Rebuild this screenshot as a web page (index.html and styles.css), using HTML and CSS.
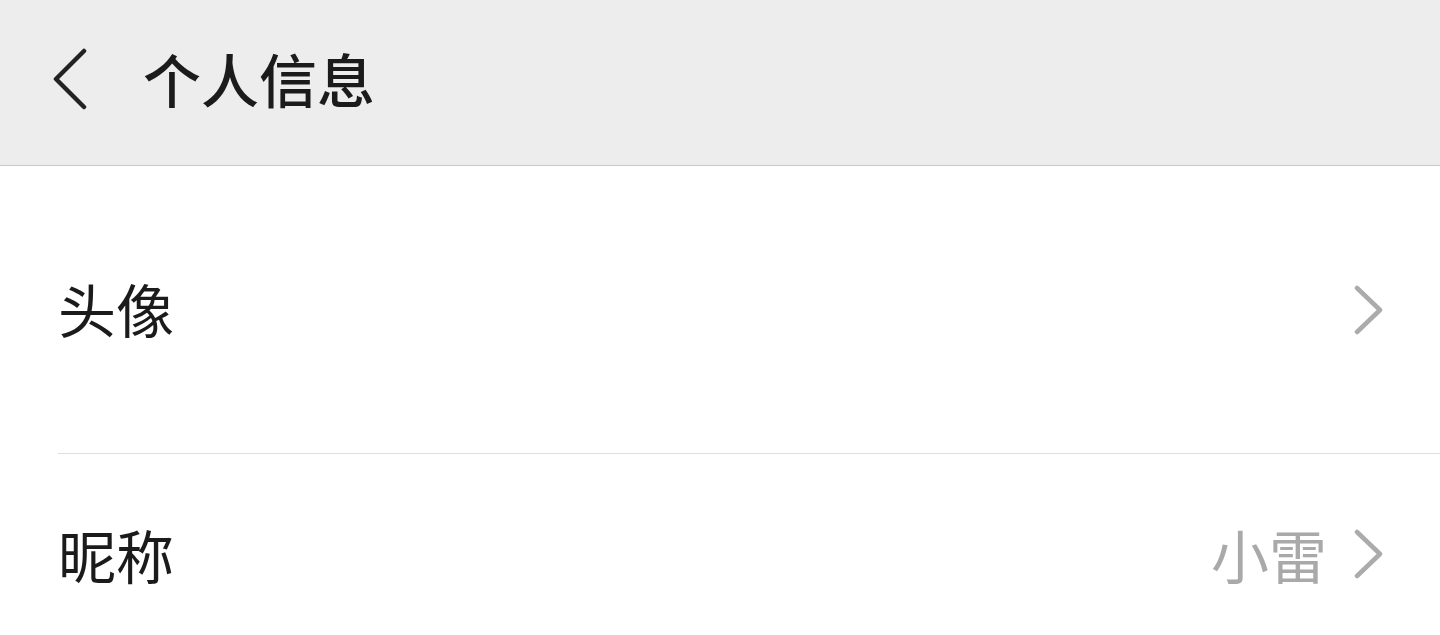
FILE: index.html
```html
<!DOCTYPE html>
<html lang="zh">
<head>
<meta charset="utf-8">
<link rel="stylesheet" href="styles.css">
</head>
<body>
<header class="topbar">
  <svg class="back" width="40" height="62" viewBox="0 0 40 62"><polyline points="34,3 6,31 34,59" fill="none" stroke="#222" stroke-width="4.5" stroke-linecap="round" stroke-linejoin="round"/></svg>
  <h1 class="title">个人信息</h1>
</header>
<main class="list">
  <div class="row row-avatar">
    <span class="label">头像</span>
    <span class="right">
      <svg class="chev" width="32" height="50" viewBox="0 0 32 50"><polyline points="4,3 27,25 4,47" fill="none" stroke="#ababab" stroke-width="4.5" stroke-linecap="round" stroke-linejoin="round"/></svg>
    </span>
  </div>
  <div class="row row-nick">
    <span class="label">昵称</span>
    <span class="right">
      <span class="value">小雷</span>
      <svg class="chev" width="32" height="50" viewBox="0 0 32 50"><polyline points="4,3 27,25 4,47" fill="none" stroke="#ababab" stroke-width="4.5" stroke-linecap="round" stroke-linejoin="round"/></svg>
    </span>
  </div>
</main>
</body>
</html>
```
FILE: styles.css
```css
html, body {
  margin: 0;
  padding: 0;
  background: #ffffff;
  font-family: "Noto Sans CJK SC", "Noto Sans", sans-serif;
  color: #1b1b1b;
}
.topbar {
  height: 165px;
  background: #ededed;
  border-bottom: 1px solid #c9c9c9;
  display: flex;
  align-items: center;
  padding-left: 50px;
  box-sizing: content-box;
}
.back {
  display: block;
  margin-top: -8px;
}
.title {
  margin: -10px 0 0 53px;
  font-size: 58px;
  font-weight: 500;
  line-height: 1;
}
.list {
  padding-left: 58px;
}
.row {
  display: flex;
  align-items: center;
  justify-content: space-between;
  padding-right: 55px;
}
.row-avatar {
  height: 287px;
  border-bottom: 1px solid #dedede;
}
.row-nick {
  height: 199px;
}
.label {
  font-size: 58px;
  line-height: 1;
}
.row-avatar .label { margin-top: -4px; }
.right {
  display: flex;
  align-items: center;
}
.value {
  font-size: 58px;
  line-height: 1;
  color: #a9a9a9;
  margin-right: 26px;
}
.chev {
  display: block;
}
```
